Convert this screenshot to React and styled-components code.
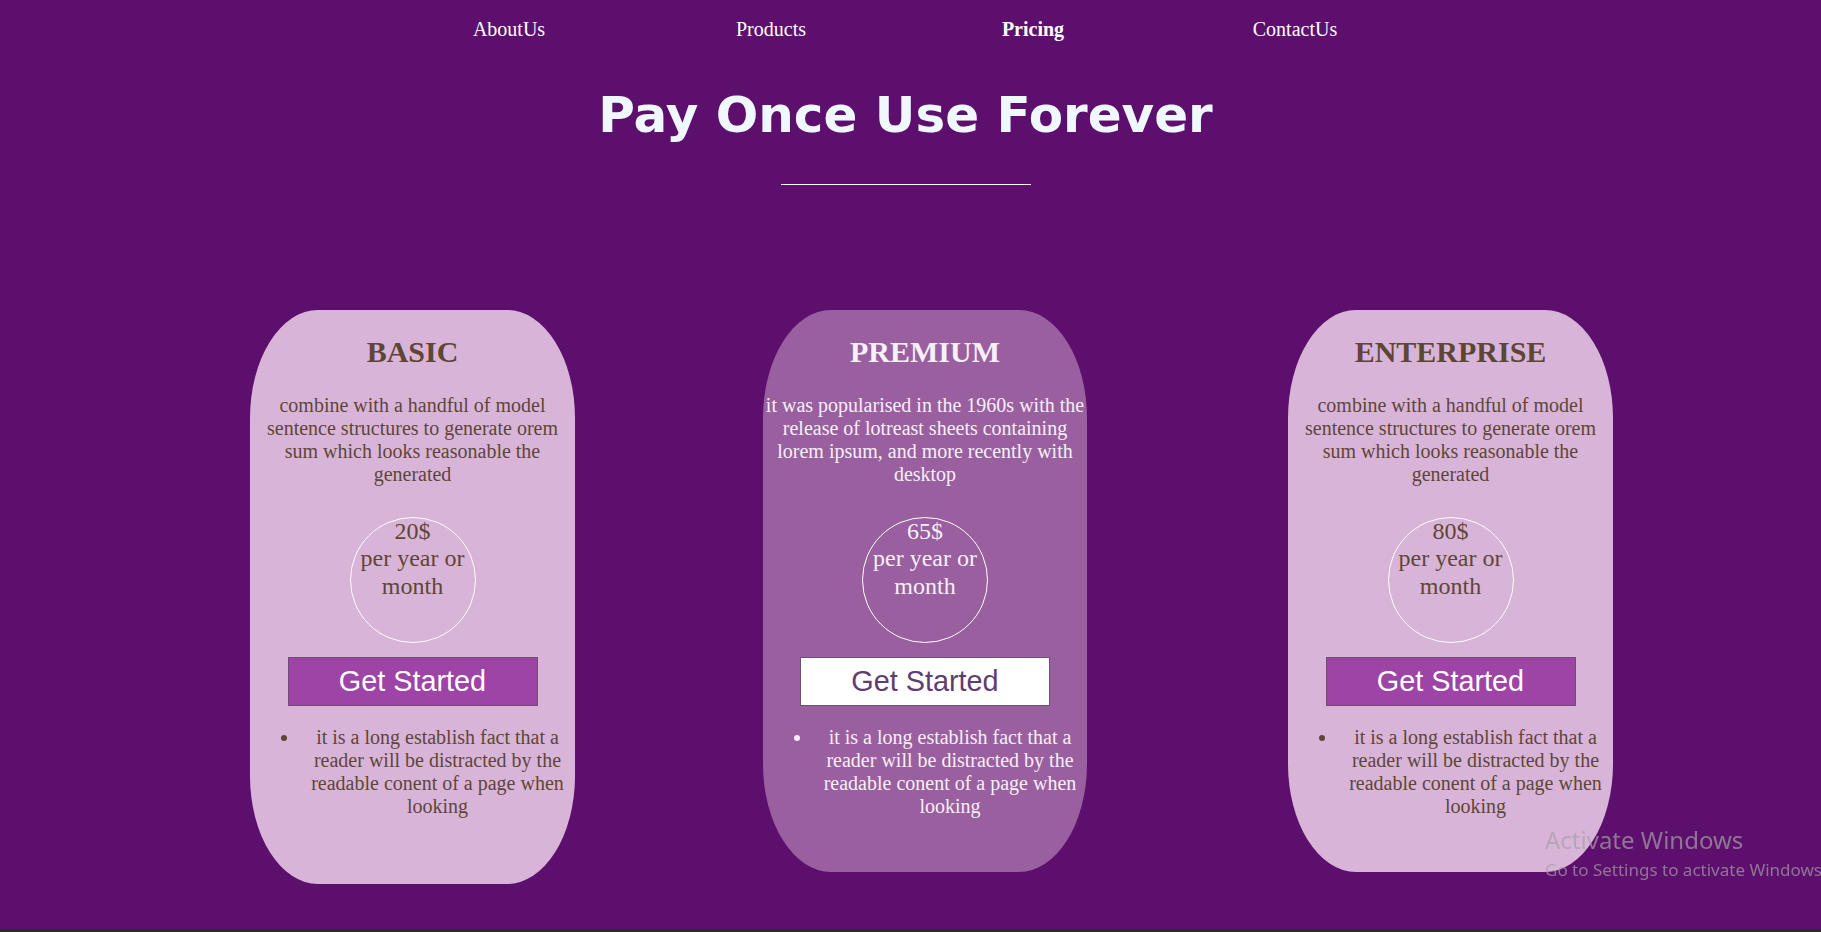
import React from "react";
import styled, { createGlobalStyle } from "styled-components";

const plans = [
    {
        name: "BASIC",
        text: "combine with a handful of model sentence structures to generate orem sum which looks reasonable the generated",
        price: "20$",
        tall: true,
    },
    {
        name: "PREMIUM",
        text: "it was popularised in the 1960s with the release of lotreast sheets containing lorem ipsum, and more recently with desktop",
        price: "65$",
        featured: true,
    },
    {
        name: "ENTERPRISE",
        text: "combine with a handful of model sentence structures to generate orem sum which looks reasonable the generated",
        price: "80$",
    },
];

const links = ["AboutUs", "Products", "Pricing", "ContactUs"];

function App() {
    return (
        <>
            <GlobalStyle />
            <Page>
                <Nav>
                    {links.map((l) => (
                        <NavLink key={l} href="#" $active={l === "Pricing"}>
                            {l}
                        </NavLink>
                    ))}
                </Nav>

                <Header>
                    <Title>Pay Once Use Forever</Title>
                    <Divider />
                </Header>

                <CardRow>
                    {plans.map((p) => (
                        <Card key={p.name} $featured={p.featured} $tall={p.tall}>
                            <PlanName>{p.name}</PlanName>
                            <Description>{p.text}</Description>
                            <PriceCircle>
                                <span>{p.price}</span>
                                <span>per year or month</span>
                            </PriceCircle>
                            <StartButton $featured={p.featured}>Get Started</StartButton>
                            <Features>
                                <li>
                                    it is a long establish fact that a reader will be
                                    distracted by the readable conent of a page when
                                    looking
                                </li>
                            </Features>
                        </Card>
                    ))}
                </CardRow>

                <Watermark>
                    <div>Activate Windows</div>
                    <small>Go to Settings to activate Windows.</small>
                </Watermark>
            </Page>
        </>
    );
}

const GlobalStyle = createGlobalStyle`
  html {
    background: #2c2926;
  }
  body {
    margin: 0;
    font-family: "Liberation Serif", "Times New Roman", serif;
  }
`;

const Page = styled.div`
  height: calc(100vh - 3px);
  background: #5d0f6d;
  overflow: hidden;
`;

const Nav = styled.nav`
  display: flex;
  justify-content: center;
  padding: 18px 17px 0 0;
`;

const NavLink = styled.a`
  width: 262px;
  text-align: center;
  color: #fff;
  font-size: 20px;
  line-height: 23px;
  font-weight: ${(p) => (p.$active ? 700 : 400)};
  text-decoration: none;
`;

const Header = styled.header`
  padding-right: 10px;
`;

const Title = styled.h1`
  margin: 45px 0 0;
  text-align: center;
  font-family: "DejaVu Sans", Verdana, sans-serif;
  font-size: 50px;
  line-height: 58px;
  font-weight: 700;
  color: #f0f8ff;
`;

const Divider = styled.hr`
  width: 250px;
  height: 1px;
  margin: 40px auto 0;
  border: none;
  background: #fff;
`;

const CardRow = styled.section`
  display: flex;
  align-items: flex-start;
  margin-top: 125px;
  padding-left: 250px;

  & > :nth-child(2) {
    width: 324px;
    margin-left: 188px;
  }
  & > :nth-child(3) {
    margin-left: 201px;
  }
`;

const Card = styled.div`
  width: 325px;
  box-sizing: border-box;
  padding: 25px 0 ${(p) => (p.$tall ? 66 : 54)}px;
  border-radius: 68px / 108px;
  background: ${(p) => (p.$featured ? "#9a5f9e" : "#d9b4d9")};
  color: ${(p) => (p.$featured ? "#f6f0fa" : "#5e4637")};
  text-align: center;
`;

const PlanName = styled.h2`
  margin: 0;
  font-size: 30px;
  line-height: 34.5px;
  font-weight: 700;
`;

const Description = styled.p`
  margin: 24.5px 1px 0;
  font-size: 20px;
  line-height: 23px;
`;

const PriceCircle = styled.div`
  display: flex;
  flex-direction: column;
  width: 126px;
  height: 126px;
  box-sizing: border-box;
  margin: 30.5px auto 0;
  border: 1px solid #fff;
  border-radius: 50%;
  font-size: 24px;
  line-height: 27.6px;
`;

const StartButton = styled.button`
  display: block;
  width: 250px;
  height: 49px;
  margin: 14px auto 0;
  padding: 0;
  border: 1px solid #6f4f71;
  background: ${(p) => (p.$featured ? "#fff" : "#9d44a6")};
  color: ${(p) => (p.$featured ? "#5e3d72" : "#fff")};
  font-family: "Liberation Sans", Arial, sans-serif;
  font-size: 28.8px;
  cursor: pointer;
`;

const Features = styled.ul`
  margin: 20px 0 0;
  padding: 0 0 0 50px;
  font-size: 20px;
  line-height: 23px;

  li {
    text-align: center;
  }
`;

const Watermark = styled.div`
  position: fixed;
  left: 1545px;
  top: 824px;
  font-family: "Noto Sans", "Open Sans", sans-serif;
  color: rgba(165, 160, 165, 0.7);
  white-space: nowrap;

  div {
    font-size: 24px;
    line-height: 32px;
  }

  small {
    display: block;
    margin-top: 2px;
    font-size: 17px;
    line-height: 23px;
  }
`;

export default App;
